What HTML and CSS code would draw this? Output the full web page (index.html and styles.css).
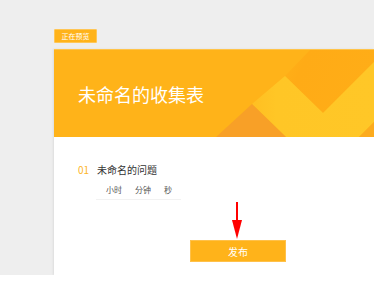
FILE: index.html
```html
<!DOCTYPE html>
<html lang="zh">
<head>
<meta charset="utf-8">
<title>预览</title>
<link rel="stylesheet" href="styles.css">
</head>
<body>
<div class="page">
  <div class="badge">正在预览</div>
  <div class="card">
    <div class="banner">
      <svg class="deco" width="320" height="88" viewBox="0 0 320 88" aria-hidden="true">
        <defs>
          <linearGradient id="dk" x1="0" y1="0" x2="1" y2="0.3">
            <stop offset="0" stop-color="#ffb118"/>
            <stop offset="0.25" stop-color="#ffab16"/>
            <stop offset="1" stop-color="#ffad17"/>
          </linearGradient>
          <linearGradient id="yl" x1="0" y1="0" x2="1" y2="0">
            <stop offset="0" stop-color="#ffbf22"/>
            <stop offset="0.2" stop-color="#ffc626"/>
            <stop offset="1" stop-color="#ffc727"/>
          </linearGradient>
        </defs>
        <polygon points="256,0 231,26 269,63 320,12 320,0" fill="url(#dk)"/>
        <polygon points="198,54 231,26 269,63 320,12 320,72 304,88 233,88" fill="url(#yl)"/>
        <polygon points="161,88 198,54 233,88" fill="#f8a027"/>
        <polygon points="304,88 320,72 320,88" fill="#fcab1e"/>
      </svg>
      <h1 class="title">未命名的收集表</h1>
    </div>
    <div class="content">
      <div class="question">
        <span class="num">01</span>
        <span class="qtitle">未命名的问题</span>
      </div>
      <div class="time-fields">
        <span>小时</span><span>分钟</span><span>秒</span>
      </div>
      <div class="actions">
        <div class="publish">
          <svg class="arrow" width="10" height="37" viewBox="0 0 10 37" aria-hidden="true">
            <rect x="4" y="0" width="2" height="20" fill="#ff0000"/>
            <polygon points="0,18 10,18 5,37" fill="#ff0000"/>
          </svg>
          <button class="btn" type="button">发布</button>
        </div>
      </div>
    </div>
  </div>
</div>
</body>
</html>
```
FILE: styles.css
```css
html, body {
  margin: 0;
  padding: 0;
  background: #ffffff;
  font-family: "Noto Sans CJK SC", "Noto Sans", sans-serif;
}

.page {
  box-sizing: border-box;
  height: 275px;
  background: #eeeeee;
  padding: 29px 0 0 54px;
  overflow: hidden;
  display: flex;
  flex-direction: column;
  align-items: flex-start;
}

.badge {
  box-sizing: border-box;
  width: 43px;
  height: 14px;
  line-height: 12px;
  font-size: 7px;
  text-align: center;
  color: #ffffff;
  background: #ffb31a;
  border: 1px solid #ffc655;
  border-radius: 1px;
}

.card {
  margin-top: 6px;
  align-self: stretch;
  flex: 1;
  background: #ffffff;
  box-shadow: -1px 0 2px rgba(0, 0, 0, 0.07);
}

.banner {
  position: relative;
  height: 88px;
  background: #ffb319;
  display: flex;
  align-items: center;
  padding-left: 24px;
  overflow: hidden;
  border-top: 1px solid #ffc44a;
  box-sizing: border-box;
}

.deco {
  position: absolute;
  left: 0;
  top: 0;
}

.title {
  position: relative;
  margin: 0;
  font-size: 18px;
  font-weight: 400;
  color: #ffffff;
  line-height: 24px;
}

.content {
  padding: 25px 0 0 24px;
}

.question {
  display: flex;
  align-items: center;
  height: 14px;
  font-size: 10px;
}

.num {
  width: 19px;
  color: #fdb52a;
}

.qtitle {
  color: #333333;
}

.time-fields {
  margin: 8px 0 0 18px;
  width: 85px;
  box-sizing: border-box;
  padding: 0 0 3px 10px;
  display: flex;
  gap: 13px;
  font-size: 8px;
  line-height: 12px;
  color: #555555;
  border-bottom: 1px solid #f2f2f2;
}

.actions {
  margin-top: 40px;
  padding-left: 112px;
}

.publish {
  position: relative;
  width: 96px;
}

.arrow {
  position: absolute;
  left: 42px;
  top: -38px;
}

.btn {
  display: block;
  box-sizing: border-box;
  width: 96px;
  height: 22px;
  padding: 0;
  margin: 0;
  font-family: inherit;
  font-size: 10px;
  color: #ffffff;
  background: #ffb31a;
  border: 1px solid #ffc14a;
  border-radius: 0;
}
```
